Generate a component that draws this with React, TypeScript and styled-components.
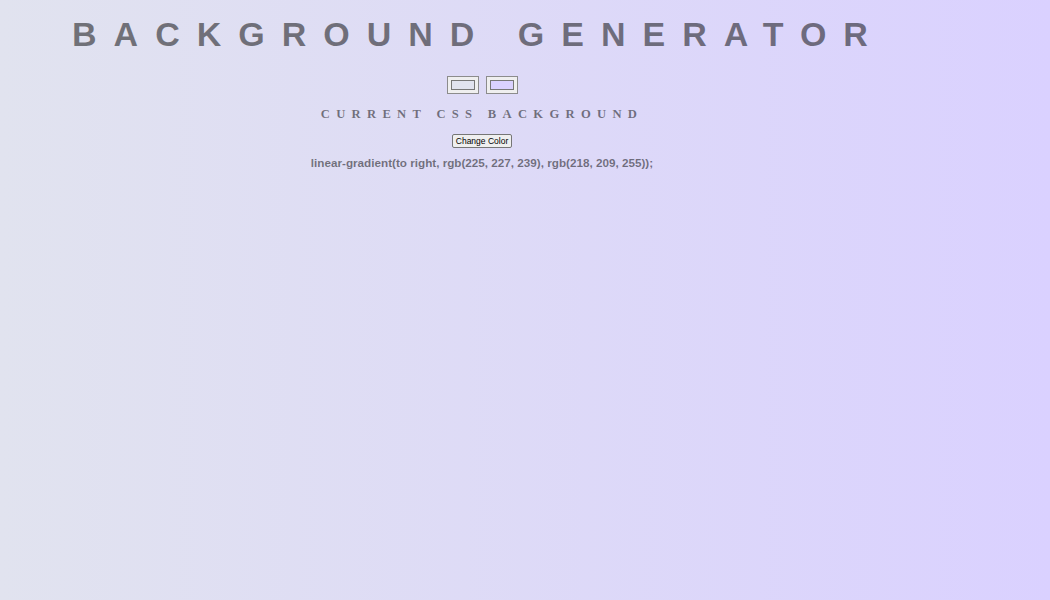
import React, { useState } from "react";
import styled, { createGlobalStyle } from "styled-components";

const GlobalStyle = createGlobalStyle`
  html, body {
    margin: 0;
    padding: 0;
    min-height: 100%;
  }
  body {
    min-height: 600px;
    font-family: "Liberation Sans", Arial, sans-serif;
    color: rgba(0, 0, 0, 0.5);
  }
`;

const Page = styled.div<{ $c1: string; $c2: string }>`
  min-height: 600px;
  background: linear-gradient(to right, ${(p) => p.$c1}, ${(p) => p.$c2});
`;

const Main = styled.main`
  width: 964px;
  display: flex;
  flex-direction: column;
  align-items: center;
  text-align: center;
`;

const Title = styled.h1`
  margin: 14px 7px 0 0;
  font: 700 34px/40px "Liberation Sans", Arial, sans-serif;
  letter-spacing: 0.5em;
  text-transform: uppercase;
  color: rgba(0, 0, 0, 0.5);
  white-space: nowrap;
`;

const Pickers = styled.div`
  margin-top: 22px;
  display: flex;
  gap: 7px;
`;

const ColorInput = styled.input`
  -webkit-appearance: none;
  appearance: none;
  box-sizing: border-box;
  width: 32px;
  height: 18px;
  padding: 3px;
  margin: 0;
  border: 1px solid #8c8c8c;
  background: #efefef;
  &::-webkit-color-swatch-wrapper {
    padding: 0;
  }
  &::-webkit-color-swatch {
    border: 1px solid #777777;
  }
`;

const Subtitle = styled.h3`
  margin: 12px 0 0;
  font: 700 12.6px/16px "Liberation Serif", "Times New Roman", serif;
  letter-spacing: 0.5em;
  text-transform: uppercase;
  color: rgba(0, 0, 0, 0.5);
`;

const Button = styled.button`
  margin-top: 12px;
  box-sizing: border-box;
  height: 14px;
  padding: 0 3px;
  font: 400 8.5px/12px "Liberation Sans", Arial, sans-serif;
  color: #000;
  background: #efefef;
  border: 1px solid #767676;
  border-radius: 2px;
`;

const Output = styled.p`
  margin: 8px 0 0;
  font: 700 11.7px/14px "Liberation Sans", Arial, sans-serif;
  color: rgba(0, 0, 0, 0.5);
`;

const rand = () => Math.floor(Math.random() * 256);
const toHex = (n: number) => n.toString(16).padStart(2, "0");
const hexToRgb = (h: string) => {
  const v = parseInt(h.slice(1), 16);
  return `rgb(${(v >> 16) & 255}, ${(v >> 8) & 255}, ${v & 255})`;
};

export default function App() {
  const [c1, setC1] = useState("#e1e3ef");
  const [c2, setC2] = useState("#dad1ff");
  const randomize = () => {
    setC1(`#${toHex(rand())}${toHex(rand())}${toHex(rand())}`);
    setC2(`#${toHex(rand())}${toHex(rand())}${toHex(rand())}`);
  };
  const css = `linear-gradient(to right, ${hexToRgb(c1)}, ${hexToRgb(c2)});`;
  return (
    <>
      <GlobalStyle />
      <Page $c1={c1} $c2={c2}>
        <Main>
          <Title>Background Generator</Title>
          <Pickers>
            <ColorInput type="color" value={c1} onChange={(e) => setC1(e.target.value)} />
            <ColorInput type="color" value={c2} onChange={(e) => setC2(e.target.value)} />
          </Pickers>
          <Subtitle>Current CSS Background</Subtitle>
          <Button onClick={randomize}>Change Color</Button>
          <Output>{css}</Output>
        </Main>
      </Page>
    </>
  );
}
